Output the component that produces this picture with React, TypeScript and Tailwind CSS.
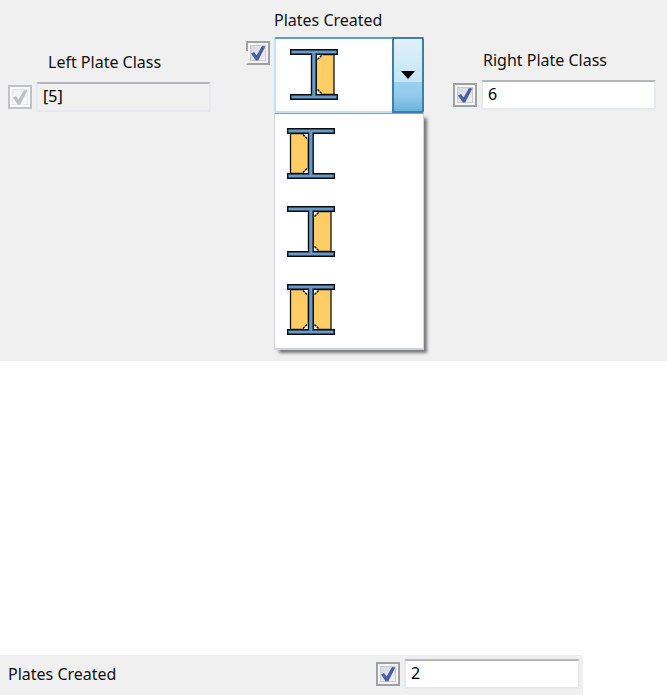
import { useState } from "react";
import clsx from "clsx";

type PlateSide = "left" | "right" | "both"

const options: { value: PlateSide; label: string }[] = [
    { value: "left", label: "Left plate" },
    { value: "right", label: "Right plate" },
    { value: "both", label: "Both plates" },
]

function Plate() {
    return (
        <>
            <path d="M26 5.5H44V45.5H26Z" fill="#ffcc66" stroke="#111" strokeWidth="1.3" />
            <path d="M26 6H31.5L26 11.5ZM26 45H31.5L26 39.5Z" fill="#fff" />
            <path d="M31.5 6.5L27 11M31.5 44.5L27 40" stroke="#111" strokeWidth="1.5" strokeDasharray="2.4 .8" />
        </>
    )
}

function BeamIcon({ side }: { side: PlateSide }) {
    return (
        <svg viewBox="0 0 48 51" className="w-12 h-[51px]" fill="none" aria-hidden="true">
            {side !== "left" && <Plate />}
            {side !== "right" && (
                <g transform="matrix(-1 0 0 1 47.5 0)">
                    <Plate />
                </g>
            )}
            <path
                d="M.7 .7H47.3V5.3H26.2V45.7H47.3V50.3H.7V45.7H21.5V5.3H.7Z"
                fill="#6699cc"
                stroke="#0a0a0a"
                strokeWidth="1.4"
            />
        </svg>
    )
}

type CheckProps = {
    label: string
    disabled?: boolean
    cutCorner?: boolean
}

function Check({ label, disabled, cutCorner }: CheckProps) {
    return (
        <span className="relative grid size-6 shrink-0">
            <input
                type="checkbox"
                aria-label={label}
                defaultChecked
                disabled={disabled}
                className={clsx(
                    "peer col-start-1 row-start-1 size-6 appearance-none border-2 border-[#a0a2a2] bg-linear-to-br from-[#cfd3da] to-[#f6f6f6] bg-clip-padding shadow-[inset_0_0_0_2px_#f4f4f4,inset_0_0_0_3px_#c8ccd2] disabled:border-[#bfc3c8] disabled:from-[#f0f0f0] disabled:to-[#fafafa] disabled:shadow-[inset_0_0_0_2px_#fafafa,inset_0_0_0_3px_#e6e6e6]",
                    cutCorner && "border-l-transparent"
                )}
            />
            <svg
                viewBox="0 0 24 24"
                fill="none"
                className="pointer-events-none invisible col-start-1 row-start-1 size-6 text-[#4a5f9f] peer-checked:visible peer-disabled:text-[#c0c0c0]"
                aria-hidden="true"
            >
                <path d="M5 12.5L8 11L10.6 14.5L16 5L19.3 5.4L12.2 19.4H9.8Z" fill="currentColor" />
            </svg>
            {cutCorner && <span className="pointer-events-none absolute top-0 left-0 h-2.5 w-0.5 bg-[#a0a2a2]" />}
        </span>
    )
}

type FieldProps = {
    id: string
    label: string
    value: string
    disabled?: boolean
}

function Field({ id, label, value, disabled }: FieldProps) {
    return (
        <div className="flex items-center gap-1">
            <Check label={`Use ${label}`} disabled={disabled} />
            <input
                id={id}
                defaultValue={value}
                disabled={disabled}
                className="h-[30px] w-full min-w-0 flex-1 rounded-xs border-2 border-[#e6e9f0] border-t-[#b4b6bc] bg-white px-[5px] pb-0.5 text-black disabled:bg-[#f0f0f0]"
            />
        </div>
    )
}

export default function App() {
    const [open, setOpen] = useState(true)
    const [side, setSide] = useState<PlateSide>("right")

    const select = (value: PlateSide) => {
        setSide(value)
        setOpen(false)
    }

    return (
        <main className="min-h-screen bg-white font-['Noto_Sans',sans-serif] text-base leading-6 text-[#111]">
            <section className="grid grid-cols-[246fr_178px_243fr] bg-[#f0f0f0] pt-2 pb-[248px]">
                <div className="pt-[42px] pr-[35px] pl-2">
                    <label htmlFor="left-class" className="mb-2 block pl-10">
                        Left Plate Class
                    </label>
                    <Field id="left-class" label="Left Plate Class" value="[5]" disabled />
                </div>

                <div>
                    <div id="plates-label" className="mb-[5px] pl-7">Plates Created</div>
                    <div className="flex gap-1">
                        <div className="pt-1">
                            <Check label="Use Plates Created" cutCorner />
                        </div>
                        <div className="relative flex-1">
                            <button
                                type="button"
                                aria-haspopup="listbox"
                                aria-expanded={open}
                                aria-labelledby="plates-label"
                                onClick={() => setOpen(!open)}
                                className="flex h-[76px] w-full rounded-xs border-2 border-[#c3e2f5] border-t-[#5a9ccb] bg-white"
                            >
                                <span className="flex flex-1 self-center pb-0.5 pl-3.5">
                                    <BeamIcon side={side} />
                                </span>
                                <span className="-m-0.5 flex w-8 items-center justify-center self-stretch rounded-r-xs border-2 border-[#3c7fa9] bg-[linear-gradient(#e0f1fb,#c3e5f6_60%,#98d1ef_60%,#90caea_80%,#68b3db)]">
                                    <svg viewBox="0 0 14 8" className="w-3.5 h-2" aria-hidden="true">
                                        <path d="M0 0H14L7 8Z" fill="#000" />
                                    </svg>
                                </span>
                            </button>
                            {open && (
                                <ul
                                    role="listbox"
                                    aria-labelledby="plates-label"
                                    className="absolute inset-x-0 top-full border border-b-2 border-[#d0d3de] border-t-[#9a9ca4] bg-white shadow-[4px_4px_3px_-1px_#777]"
                                >
                                    {options.map(option => (
                                        <li key={option.value} role="option" aria-selected={option.value === side}>
                                            <button
                                                type="button"
                                                aria-label={option.label}
                                                onClick={() => select(option.value)}
                                                className="flex h-[78px] w-full items-center pl-3 hover:bg-[#eaf4fb]"
                                            >
                                                <BeamIcon side={option.value} />
                                            </button>
                                        </li>
                                    ))}
                                </ul>
                            )}
                        </div>
                    </div>
                </div>

                <div className="pt-10 pr-[11px] pl-[29px]">
                    <label htmlFor="right-class" className="mb-2 block pl-[30px]">
                        Right Plate Class
                    </label>
                    <Field id="right-class" label="Right Plate Class" value="6" />
                </div>
            </section>

            <section className="mt-[294px] mr-[84px] flex items-center justify-between bg-[#f0f0f0] pt-1 pr-[3px] pb-1.5 pl-2">
                <label htmlFor="plates-created">Plates Created</label>
                <div className="w-[204px]">
                    <Field id="plates-created" label="Plates Created" value="2" />
                </div>
            </section>
        </main>
    )
}
